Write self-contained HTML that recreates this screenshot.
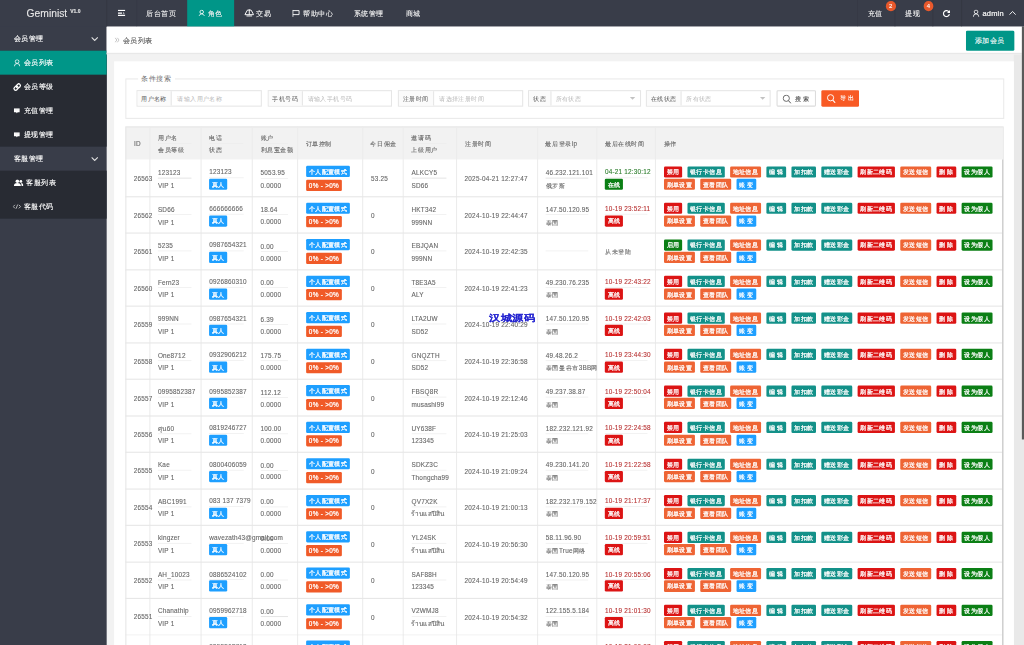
<!DOCTYPE html>
<html><head><meta charset="utf-8">
<style>
html,body{margin:0;padding:0;}
body{width:1024px;height:645px;overflow:hidden;position:relative;background:#f2f2f2;font-family:"Liberation Sans",sans-serif;color:#666;-webkit-text-stroke:0.1px;}
.abs{position:absolute;}
.header{position:absolute;left:0;top:0;width:1024px;height:26.67px;background:#393D49;}
.logo{position:absolute;left:26.6px;top:6.6px;color:#e8e8e8;font-size:10.3px;line-height:14px;white-space:nowrap;}
.logo sup{font-size:5px;position:relative;top:-1.8px;vertical-align:top;margin-left:3px;font-weight:bold;}
.nav{position:absolute;top:0;height:26.67px;line-height:26.67px;font-size:7.47px;color:#f2f2f2;white-space:nowrap;-webkit-text-stroke:0.1px;}
.hsep{position:absolute;top:0;width:1px;height:26.67px;background:#353843;}
.side{position:absolute;left:0;top:26.67px;width:106.67px;height:619px;}
.sidebg{position:absolute;left:0;top:0;width:106.67px;height:650px;background:#393D49;}
.sub{position:absolute;left:0;width:106.67px;background:#282B33;}
.sitem{position:absolute;left:0;width:106.67px;height:24px;line-height:24px;font-size:7.47px;color:#fff;white-space:nowrap;-webkit-text-stroke:0.12px;}
.crumb{position:absolute;left:106.67px;top:26.67px;width:915.3px;height:25.9px;background:#fff;border-bottom:2px solid #e8e8e8;}
.card{position:absolute;left:114.2px;top:61.2px;width:899.8px;height:600px;background:#fff;}
.fs{position:absolute;left:125.4px;top:78.2px;width:876.9px;height:38.7px;border:1.07px solid #eaeaea;}
.legend{position:absolute;left:138px;top:73px;padding:0 3.5px;background:#fff;font-size:7.47px;line-height:11px;color:#707070;-webkit-text-stroke:0;}
.ig{position:absolute;top:90.2px;height:14.1px;border:1.07px solid #e6e6e6;background:#fff;-webkit-text-stroke:0;}
.ig .lb{position:absolute;left:0;top:0;height:14.1px;line-height:16.1px;background:#fbfbfb;border-right:1.07px solid #e6e6e6;font-size:6.4px;color:#555;text-align:center;}
.ig .ph{position:absolute;top:0;height:14.1px;line-height:15.8px;font-size:6.4px;color:#b8b8b8;white-space:nowrap;}
.arrow{position:absolute;top:6px;width:0;height:0;border-left:2.7px solid transparent;border-right:2.7px solid transparent;border-top:3px solid #c2c2c2;}
.tbl-head{position:absolute;left:125.5px;top:126.4px;width:877.1px;height:33.3px;background:#f2f2f2;}
.tborder{position:absolute;left:125.5px;top:126.4px;width:876.1px;height:600px;border:1.07px solid #e6e6e6;}
.vline{position:absolute;top:126.4px;width:1px;height:520px;background:#ececec;}
.rowline{position:absolute;left:125.5px;width:877px;height:1px;background:#e6e6e6;}
.t{position:absolute;font-size:6.4px;line-height:8px;margin-top:-3.0px;color:#666;white-space:nowrap;letter-spacing:0.2px;}
.sep{position:absolute;height:0.6px;background:#e6e6e6;}
.badge{position:absolute;height:11.2px;line-height:12.2px;padding:0 2.67px;font-size:6.4px;color:#fff;-webkit-text-stroke:0.22px;overflow:hidden;border-radius:1.3px;white-space:nowrap;}
.blue{background:#1E9FFF;}
.orange{background:#EE6434;}
.badge.orange{background:#F05A28;}
.red{background:#DC1414;}
.teal{background:#139189;}
.dgreen{background:#0B7F15;}
.tgreen{color:#2B7D2B;}
.tred{color:#B83232;}
.ops{position:absolute;white-space:nowrap;font-size:0;height:11.3px;}
.btn{display:inline-block;height:11.3px;line-height:12.5px;padding:0 2.67px;font-size:6.4px;color:#fff;-webkit-text-stroke:0.22px;overflow:hidden;box-sizing:border-box;border-radius:1.3px;margin-right:5.33px;vertical-align:top;}
.wm{position:absolute;left:488.8px;top:311.25px;font-size:11.7px;line-height:14px;font-weight:bold;color:#2323d0;white-space:nowrap;letter-spacing:0px;transform:scaleY(0.8);transform-origin:50% 50%;}
.scroll{position:absolute;left:1022px;top:26.67px;width:2px;height:413px;background:#5a5a5a;}
.scrolltrack{position:absolute;left:1014px;top:52.5px;width:10px;height:600px;background:#e9e9e9;}
#root{position:absolute;left:0;top:0;width:1920px;height:1220px;transform:scale(0.5333333);transform-origin:0 0;overflow:hidden;}
#z{zoom:1.875;position:absolute;left:0;top:0;width:1024px;height:650px;overflow:hidden;}
</style></head><body><div id="root"><div id="z">
<div class="sidebg"></div>
<div class="header">
  <div class="logo">Geminist<sup>V1.0</sup></div>
  <div class="hsep" style="left:106.2px"></div>
  <div class="hsep" style="left:136.3px"></div>
  <!-- shrink icon -->
  <svg class="abs" style="left:117.8px;top:9.8px" width="7.6" height="6.6" viewBox="0 0 7.6 6.6"><path d="M0 0.8 H7.4 M0 3.6 H4.2 M0 5.8 H7.4" stroke="#fff" stroke-width="1.15"/><path d="M5.25 4.2 L6.6 4.2 L5.9 2.2 Z" fill="#fff"/></svg>
  <div class="nav" style="left:146.5px">后台首页</div>
  <div class="abs" style="left:187px;top:0;width:47px;height:26.67px;background:#009688"></div>
  <svg class="abs" style="left:198.6px;top:9.6px" width="7" height="6.6" viewBox="0 0 7 6.6"><circle cx="3.3" cy="2.4" r="1.75" fill="none" stroke="#fff" stroke-width="0.85"/><path d="M0.6 6.3 Q1.5 4.3 3.3 4.2 Q5.1 4.3 6.0 6.3" fill="none" stroke="#fff" stroke-width="0.85"/></svg>
  <div class="nav" style="left:208px">角色</div>
  <svg class="abs" style="left:244px;top:9.2px" width="10" height="7.6" viewBox="0 0 10 7.6"><path d="M3.2 1 H6.8 L9.4 5.6 H0.6 Z" fill="none" stroke="#fff" stroke-width="0.95"/><path d="M5 0.3 V5.6 M2.2 6.9 H7.8" stroke="#fff" stroke-width="0.95"/></svg>
  <div class="nav" style="left:256.4px">交易</div>
  <svg class="abs" style="left:292.5px;top:9.6px" width="7.5" height="7.5" viewBox="0 0 7.5 7.5"><path d="M0.6 0.3 L0.6 7.3 M0.6 1 L6.8 1 L6.8 5 L0.6 5" fill="none" stroke="#fff" stroke-width="0.9"/></svg>
  <div class="nav" style="left:303.2px">帮助中心</div>
  <div class="nav" style="left:354px">系统管理</div>
  <div class="nav" style="left:405.8px">商城</div>

  <div class="hsep" style="left:856.8px"></div>
  <div class="hsep" style="left:894.5px"></div>
  <div class="hsep" style="left:932.4px"></div>
  <div class="hsep" style="left:961.3px"></div>
  <div class="nav" style="left:867.8px">充值</div>
  <div class="abs" style="left:885.8px;top:1px;width:10px;height:10px;border-radius:50%;background:#E8592C;color:#fff;font-size:6px;line-height:10px;text-align:center">2</div>
  <div class="nav" style="left:905.2px">提现</div>
  <div class="abs" style="left:923.5px;top:1px;width:10px;height:10px;border-radius:50%;background:#E8592C;color:#fff;font-size:6px;line-height:10px;text-align:center">4</div>
  <svg class="abs" style="left:942.3px;top:9.8px" width="8" height="8" viewBox="0 0 8 8"><path d="M6.6 2.4 A3 3 0 1 0 7 4.6" fill="none" stroke="#fff" stroke-width="1.2"/><path d="M7.6 0.4 L7.6 3.4 L4.6 3.4 Z" fill="#fff"/></svg>
  <svg class="abs" style="left:973px;top:9.6px" width="6.5" height="7.5" viewBox="0 0 6.5 7.5"><circle cx="3.25" cy="2.3" r="1.8" fill="none" stroke="#fff" stroke-width="0.8"/><path d="M0.5 7.2 Q0.5 4.3 3.25 4.3 Q6 4.3 6 7.2" fill="none" stroke="#fff" stroke-width="0.8"/></svg>
  <div class="nav" style="left:982.5px;letter-spacing:0.2px;-webkit-text-stroke:0.25px">admin</div>
  <svg class="abs" style="left:1008.8px;top:10.5px" width="7" height="4.5" viewBox="0 0 7 4.5"><path d="M0.4 4 L3.5 0.8 L6.6 4" fill="none" stroke="#fff" stroke-width="0.9"/></svg>
</div>

<div class="side">
  <div class="sitem" style="top:0"><span style="position:absolute;left:13.75px">会员管理</span></div>
  <svg class="abs" style="left:91.2px;top:10.3px" width="7" height="4.5" viewBox="0 0 7 4.5"><path d="M0.4 0.5 L3.5 3.7 L6.6 0.5" fill="none" stroke="#e0e0e0" stroke-width="1.1"/></svg>
  <div class="sub" style="top:24px;height:96px"></div>
  <div class="sitem" style="top:24px;background:#009688"><svg class="abs" style="left:13.8px;top:8.4px" width="6.5" height="7.5" viewBox="0 0 6.5 7.5"><circle cx="3.25" cy="2.3" r="1.8" fill="none" stroke="#fff" stroke-width="0.8"/><path d="M0.5 7.2 Q0.5 4.3 3.25 4.3 Q6 4.3 6 7.2" fill="none" stroke="#fff" stroke-width="0.8"/></svg><span style="position:absolute;left:23.75px">会员列表</span></div>
  <div class="sitem" style="top:48px"><svg class="abs" style="left:12.6px;top:7.8px" width="8.8" height="8.8" viewBox="0 0 10 10"><g transform="rotate(-45 5 5)"><rect x="0.6" y="3.1" width="5.2" height="3.8" rx="1.9" fill="none" stroke="#fff" stroke-width="1.4"/><rect x="4.2" y="3.1" width="5.2" height="3.8" rx="1.9" fill="none" stroke="#fff" stroke-width="1.4"/></g></svg><span style="position:absolute;left:23.75px">会员等级</span></div>
  <div class="sitem" style="top:72px"><svg class="abs" style="left:13.9px;top:9.4px" width="6" height="5.4" viewBox="0 0 6 5.4"><path d="M0 0 H6 V4.1 H3.7 L3 5.3 L2.3 4.1 H0 Z" fill="#fff"/><path d="M0.9 1.6 H5.1" stroke="#d8d8d8" stroke-width="0.5"/></svg><span style="position:absolute;left:23.75px">充值管理</span></div>
  <div class="sitem" style="top:96px"><svg class="abs" style="left:13.9px;top:9.4px" width="6" height="5.4" viewBox="0 0 6 5.4"><path d="M0 0 H6 V4.1 H3.7 L3 5.3 L2.3 4.1 H0 Z" fill="#fff"/><path d="M0.9 1.6 H5.1" stroke="#d8d8d8" stroke-width="0.5"/></svg><span style="position:absolute;left:23.75px">提现管理</span></div>
  <div class="sitem" style="top:120px"><span style="position:absolute;left:13.75px">客服管理</span></div>
  <svg class="abs" style="left:91.2px;top:130.3px" width="7" height="4.5" viewBox="0 0 7 4.5"><path d="M0.4 0.5 L3.5 3.7 L6.6 0.5" fill="none" stroke="#e0e0e0" stroke-width="1.1"/></svg>
  <div class="sub" style="top:144px;height:48px"></div>
  <div class="sitem" style="top:144px"><svg class="abs" style="left:13.75px;top:8.5px" width="9.5" height="7" viewBox="0 0 9.5 7"><circle cx="3.5" cy="2" r="1.8" fill="#fff"/><path d="M0 6.8 Q0 3.9 3.5 3.9 Q7 3.9 7 6.8 Z" fill="#fff"/><circle cx="7" cy="2.2" r="1.4" fill="#fff"/><path d="M7.2 3.9 Q9.5 4 9.5 6.8 L7.8 6.8" fill="#fff"/></svg><span style="position:absolute;left:26.25px">客服列表</span></div>
  <div class="sitem" style="top:168px"><svg class="abs" style="left:13px;top:9.6px" width="8.2" height="4.6" viewBox="0 0 8.2 4.6"><path d="M2.2 0.5 L0.4 2.3 L2.2 4.1 M6 0.5 L7.8 2.3 L6 4.1 M4.9 0.2 L3.3 4.4" fill="none" stroke="#e6e6e6" stroke-width="0.75"/></svg><span style="position:absolute;left:23.6px">客服代码</span></div>
</div>

<div class="scrolltrack"></div>
<div class="crumb">
  <svg class="abs" style="left:8px;top:10.9px" width="5" height="5.4" viewBox="0 0 5 5.4"><path d="M0.4 0.4 L2.2 2.7 L0.4 5 M2.6 0.4 L4.4 2.7 L2.6 5" fill="none" stroke="#b5b5b5" stroke-width="0.8"/></svg>
  <span class="abs" style="left:16.6px;top:8.3px;font-size:7.47px;line-height:10px;color:#555;letter-spacing:-0.27px">会员列表</span>
</div>
<div class="abs" style="left:965.6px;top:30.3px;width:48.6px;height:20.2px;background:#009688;border-radius:1.5px;color:#fff;font-size:7.47px;line-height:20.2px;text-align:center">添加会员</div>
<div class="card"></div>
<div class="fs"></div>
<div class="legend">条件搜索</div>

<div class="ig" style="left:136.3px;width:123.6px"><div class="lb" style="width:33.4px">用户名称</div><div class="ph" style="left:40px">请输入用户名称</div></div>
<div class="ig" style="left:267.6px;width:122.4px"><div class="lb" style="width:33px">手机号码</div><div class="ph" style="left:39px">请输入手机号码</div></div>
<div class="ig" style="left:397.7px;width:123.6px"><div class="lb" style="width:34.1px">注册时间</div><div class="ph" style="left:40.5px">请选择注册时间</div></div>
<div class="ig" style="left:528.1px;width:110.7px"><div class="lb" style="width:21px">状态</div><div class="ph" style="left:26.5px">所有状态</div><div class="arrow" style="left:100.8px"></div></div>
<div class="ig" style="left:645.7px;width:122.8px"><div class="lb" style="width:33.8px">在线状态</div><div class="ph" style="left:39.5px">所有状态</div><div class="arrow" style="left:113.3px"></div></div>
<div class="abs" style="left:776.6px;top:90.2px;width:37px;height:14.4px;border:1.07px solid #dcdcdc;background:#fff;border-radius:1.3px"></div>
<svg class="abs" style="left:782.2px;top:94.6px" width="9" height="9.4" viewBox="0 0 9 9.4"><circle cx="3.9" cy="3.9" r="3.1" fill="none" stroke="#555" stroke-width="0.85"/><path d="M6.1 6.3 L8.6 9" stroke="#555" stroke-width="1"/></svg>
<div class="abs" style="left:794.8px;top:93.5px;font-size:6.4px;line-height:11px;color:#444;letter-spacing:2.2px">搜索</div>
<div class="abs" style="left:821.1px;top:90.2px;width:38.3px;height:16.4px;background:#F85A24;border-radius:1.3px"></div>
<svg class="abs" style="left:826.6px;top:93.6px" width="9" height="9.4" viewBox="0 0 9 9.4"><circle cx="3.9" cy="3.9" r="3.1" fill="none" stroke="#fff" stroke-width="0.95"/><path d="M6.1 6.3 L8.6 9" stroke="#fff" stroke-width="1.1"/></svg>
<div class="abs" style="left:840.3px;top:92.8px;font-size:6.4px;line-height:11px;color:#fff;letter-spacing:1.6px">导出</div>

<div class="tbl-head"></div>
<div class="tborder"></div>
<div class="vline" style="left:149.20px"></div><div class="vline" style="left:200.50px"></div><div class="vline" style="left:251.90px"></div><div class="vline" style="left:297.20px"></div><div class="vline" style="left:362.20px"></div><div class="vline" style="left:402.80px"></div><div class="vline" style="left:455.90px"></div><div class="vline" style="left:537.10px"></div><div class="vline" style="left:596.30px"></div><div class="vline" style="left:654.90px"></div>
<div class="t" style="left:134px;top:142.9px">ID</div>
<div class="t" style="left:158.1px;top:137.6px">用户名</div>
<div class="sep" style="left:158.1px;top:143.4px;width:33.6px;background:#eaeaea"></div>
<div class="t" style="left:158.1px;top:149.3px">会员等级</div>
<div class="t" style="left:208.9px;top:137.6px">电话</div>
<div class="sep" style="left:208.9px;top:143.4px;width:34.4px;background:#eaeaea"></div>
<div class="t" style="left:208.9px;top:149.3px">状态</div>
<div class="t" style="left:260.6px;top:137.6px">账户</div>
<div class="sep" style="left:260.6px;top:143.4px;width:27.4px;background:#eaeaea"></div>
<div class="t" style="left:260.6px;top:149.3px">利息宝金额</div>
<div class="t" style="left:305.6px;top:143px">订单控制</div>
<div class="t" style="left:370.5px;top:143px">今日佣金</div>
<div class="t" style="left:411.5px;top:137.6px">邀请码</div>
<div class="sep" style="left:411.5px;top:143.4px;width:35px;background:#eaeaea"></div>
<div class="t" style="left:411.5px;top:149.3px">上级用户</div>
<div class="t" style="left:465px;top:143px">注册时间</div>
<div class="t" style="left:545.4px;top:143px">最后登录ip</div>
<div class="t" style="left:605px;top:143px">最后在线时间</div>
<div class="t" style="left:663.6px;top:143px">操作</div>
<div class="rowline" style="top:196.22px"></div>
<div class="t c" style="left:133.70px;top:178.30px;">26563</div>
<div class="t c" style="left:157.90px;top:172.30px;">123123</div>
<div class="sep" style="left:157.90px;top:177.80px;width:33.6px"></div>
<div class="t c" style="left:157.90px;top:184.90px;">VIP 1</div>
<div class="t c nowrap" style="left:209.20px;top:171.70px;">123123</div>
<div class="sep" style="left:209.20px;top:177.50px;width:34.4px"></div>
<div class="badge blue" style="left:209.20px;top:178.80px">真人</div>
<div class="t c" style="left:260.60px;top:172.50px;">5053.95</div>
<div class="sep" style="left:260.60px;top:178.00px;width:27.4px"></div>
<div class="t c" style="left:260.60px;top:184.70px;">0.0000</div>
<div class="badge blue" style="left:306.10px;top:166.00px">个人配置模式</div>
<div class="badge orange" style="left:306.10px;top:179.70px;letter-spacing:0.3px">0% - &gt;0%</div>
<div class="t c" style="left:370.90px;top:178.40px;">53.25</div>
<div class="t c" style="left:411.50px;top:172.30px;">ALKCY5</div>
<div class="sep" style="left:411.50px;top:177.80px;width:35px"></div>
<div class="t c" style="left:411.50px;top:184.90px;">SD66</div>
<div class="t c nowrap" style="left:464.60px;top:178.40px;">2025-04-21 12:27:47</div>
<div class="t c nowrap" style="left:545.80px;top:172.30px;">46.232.121.101</div>
<div class="sep" style="left:545.80px;top:177.80px;width:42.4px"></div>
<div class="t c nowrap" style="left:545.80px;top:184.90px;">俄罗斯</div>
<div class="t c nowrap tgreen" style="left:605.00px;top:171.70px;">04-21 12:30:12</div>
<div class="sep" style="left:605.00px;top:177.50px;width:42.4px"></div>
<div class="badge dgreen" style="left:605.00px;top:178.80px">在线</div>
<div class="ops" style="left:663.90px;top:166.30px"><span class="btn red">禁用</span><span class="btn teal">银行卡信息</span><span class="btn orange">地址信息</span><span class="btn teal">编 辑</span><span class="btn teal">加扣款</span><span class="btn teal">赠送彩金</span><span class="btn red">刷新二维码</span><span class="btn orange">发送短信</span><span class="btn red">删 除</span><span class="btn dgreen">设为假人</span></div>
<div class="ops" style="left:663.90px;top:178.80px"><span class="btn orange">刷单设置</span><span class="btn orange">查看团队</span><span class="btn blue">账 变</span></div>
<div class="rowline" style="top:232.74px"></div>
<div class="t c" style="left:133.70px;top:214.82px;">26562</div>
<div class="t c" style="left:157.90px;top:208.82px;">SD66</div>
<div class="sep" style="left:157.90px;top:214.32px;width:33.6px"></div>
<div class="t c" style="left:157.90px;top:221.42px;">VIP 1</div>
<div class="t c nowrap" style="left:209.20px;top:208.22px;">666666666</div>
<div class="sep" style="left:209.20px;top:214.02px;width:34.4px"></div>
<div class="badge blue" style="left:209.20px;top:215.32px">真人</div>
<div class="t c" style="left:260.60px;top:209.02px;">18.64</div>
<div class="sep" style="left:260.60px;top:214.52px;width:27.4px"></div>
<div class="t c" style="left:260.60px;top:221.22px;">0.0000</div>
<div class="badge blue" style="left:306.10px;top:202.52px">个人配置模式</div>
<div class="badge orange" style="left:306.10px;top:216.22px;letter-spacing:0.3px">0% - &gt;0%</div>
<div class="t c" style="left:370.90px;top:214.92px;">0</div>
<div class="t c" style="left:411.50px;top:208.82px;">HKT342</div>
<div class="sep" style="left:411.50px;top:214.32px;width:35px"></div>
<div class="t c" style="left:411.50px;top:221.42px;">999NN</div>
<div class="t c nowrap" style="left:464.60px;top:214.92px;">2024-10-19 22:44:47</div>
<div class="t c nowrap" style="left:545.80px;top:208.82px;">147.50.120.95</div>
<div class="sep" style="left:545.80px;top:214.32px;width:42.4px"></div>
<div class="t c nowrap" style="left:545.80px;top:221.42px;">泰国</div>
<div class="t c nowrap tred" style="left:605.00px;top:208.22px;">10-19 23:52:11</div>
<div class="sep" style="left:605.00px;top:214.02px;width:42.4px"></div>
<div class="badge red" style="left:605.00px;top:215.32px">离线</div>
<div class="ops" style="left:663.90px;top:202.82px"><span class="btn red">禁用</span><span class="btn teal">银行卡信息</span><span class="btn orange">地址信息</span><span class="btn teal">编 辑</span><span class="btn teal">加扣款</span><span class="btn teal">赠送彩金</span><span class="btn red">刷新二维码</span><span class="btn orange">发送短信</span><span class="btn red">删 除</span><span class="btn dgreen">设为假人</span></div>
<div class="ops" style="left:663.90px;top:215.32px"><span class="btn orange">刷单设置</span><span class="btn orange">查看团队</span><span class="btn blue">账 变</span></div>
<div class="rowline" style="top:269.26px"></div>
<div class="t c" style="left:133.70px;top:251.34px;">26561</div>
<div class="t c" style="left:157.90px;top:245.34px;">5235</div>
<div class="sep" style="left:157.90px;top:250.84px;width:33.6px"></div>
<div class="t c" style="left:157.90px;top:257.94px;">VIP 1</div>
<div class="t c nowrap" style="left:209.20px;top:244.74px;">0987654321</div>
<div class="sep" style="left:209.20px;top:250.54px;width:34.4px"></div>
<div class="badge blue" style="left:209.20px;top:251.84px">真人</div>
<div class="t c" style="left:260.60px;top:245.54px;">0.00</div>
<div class="sep" style="left:260.60px;top:251.04px;width:27.4px"></div>
<div class="t c" style="left:260.60px;top:257.74px;">0.0000</div>
<div class="badge blue" style="left:306.10px;top:239.04px">个人配置模式</div>
<div class="badge orange" style="left:306.10px;top:252.74px;letter-spacing:0.3px">0% - &gt;0%</div>
<div class="t c" style="left:370.90px;top:251.44px;">0</div>
<div class="t c" style="left:411.50px;top:245.34px;">EBJQAN</div>
<div class="sep" style="left:411.50px;top:250.84px;width:35px"></div>
<div class="t c" style="left:411.50px;top:257.94px;">999NN</div>
<div class="t c nowrap" style="left:464.60px;top:251.44px;">2024-10-19 22:42:35</div>
<div class="sep" style="left:545.80px;top:250.84px;width:42.4px"></div>
<div class="t c" style="left:605.00px;top:251.44px;">从未登陆</div>
<div class="ops" style="left:663.90px;top:239.34px"><span class="btn dgreen">启用</span><span class="btn teal">银行卡信息</span><span class="btn orange">地址信息</span><span class="btn teal">编 辑</span><span class="btn teal">加扣款</span><span class="btn teal">赠送彩金</span><span class="btn red">刷新二维码</span><span class="btn orange">发送短信</span><span class="btn red">删 除</span><span class="btn dgreen">设为假人</span></div>
<div class="ops" style="left:663.90px;top:251.84px"><span class="btn orange">刷单设置</span><span class="btn orange">查看团队</span><span class="btn blue">账 变</span></div>
<div class="rowline" style="top:305.78px"></div>
<div class="t c" style="left:133.70px;top:287.86px;">26560</div>
<div class="t c" style="left:157.90px;top:281.86px;">Fern23</div>
<div class="sep" style="left:157.90px;top:287.36px;width:33.6px"></div>
<div class="t c" style="left:157.90px;top:294.46px;">VIP 1</div>
<div class="t c nowrap" style="left:209.20px;top:281.26px;">0926860310</div>
<div class="sep" style="left:209.20px;top:287.06px;width:34.4px"></div>
<div class="badge blue" style="left:209.20px;top:288.36px">真人</div>
<div class="t c" style="left:260.60px;top:282.06px;">0.00</div>
<div class="sep" style="left:260.60px;top:287.56px;width:27.4px"></div>
<div class="t c" style="left:260.60px;top:294.26px;">0.0000</div>
<div class="badge blue" style="left:306.10px;top:275.56px">个人配置模式</div>
<div class="badge orange" style="left:306.10px;top:289.26px;letter-spacing:0.3px">0% - &gt;0%</div>
<div class="t c" style="left:370.90px;top:287.96px;">0</div>
<div class="t c" style="left:411.50px;top:281.86px;">T8E3A5</div>
<div class="sep" style="left:411.50px;top:287.36px;width:35px"></div>
<div class="t c" style="left:411.50px;top:294.46px;">ALY</div>
<div class="t c nowrap" style="left:464.60px;top:287.96px;">2024-10-19 22:41:23</div>
<div class="t c nowrap" style="left:545.80px;top:281.86px;">49.230.76.235</div>
<div class="sep" style="left:545.80px;top:287.36px;width:42.4px"></div>
<div class="t c nowrap" style="left:545.80px;top:294.46px;">泰国</div>
<div class="t c nowrap tred" style="left:605.00px;top:281.26px;">10-19 22:43:22</div>
<div class="sep" style="left:605.00px;top:287.06px;width:42.4px"></div>
<div class="badge red" style="left:605.00px;top:288.36px">离线</div>
<div class="ops" style="left:663.90px;top:275.86px"><span class="btn red">禁用</span><span class="btn teal">银行卡信息</span><span class="btn orange">地址信息</span><span class="btn teal">编 辑</span><span class="btn teal">加扣款</span><span class="btn teal">赠送彩金</span><span class="btn red">刷新二维码</span><span class="btn orange">发送短信</span><span class="btn red">删 除</span><span class="btn dgreen">设为假人</span></div>
<div class="ops" style="left:663.90px;top:288.36px"><span class="btn orange">刷单设置</span><span class="btn orange">查看团队</span><span class="btn blue">账 变</span></div>
<div class="rowline" style="top:342.30px"></div>
<div class="t c" style="left:133.70px;top:324.38px;">26559</div>
<div class="t c" style="left:157.90px;top:318.38px;">999NN</div>
<div class="sep" style="left:157.90px;top:323.88px;width:33.6px"></div>
<div class="t c" style="left:157.90px;top:330.98px;">VIP 1</div>
<div class="t c nowrap" style="left:209.20px;top:317.78px;">0987654321</div>
<div class="sep" style="left:209.20px;top:323.58px;width:34.4px"></div>
<div class="badge blue" style="left:209.20px;top:324.88px">真人</div>
<div class="t c" style="left:260.60px;top:318.58px;">6.39</div>
<div class="sep" style="left:260.60px;top:324.08px;width:27.4px"></div>
<div class="t c" style="left:260.60px;top:330.78px;">0.0000</div>
<div class="badge blue" style="left:306.10px;top:312.08px">个人配置模式</div>
<div class="badge orange" style="left:306.10px;top:325.78px;letter-spacing:0.3px">0% - &gt;0%</div>
<div class="t c" style="left:370.90px;top:324.48px;">0</div>
<div class="t c" style="left:411.50px;top:318.38px;">LTA2UW</div>
<div class="sep" style="left:411.50px;top:323.88px;width:35px"></div>
<div class="t c" style="left:411.50px;top:330.98px;">SD52</div>
<div class="t c nowrap" style="left:464.60px;top:324.48px;">2024-10-19 22:40:29</div>
<div class="t c nowrap" style="left:545.80px;top:318.38px;">147.50.120.95</div>
<div class="sep" style="left:545.80px;top:323.88px;width:42.4px"></div>
<div class="t c nowrap" style="left:545.80px;top:330.98px;">泰国</div>
<div class="t c nowrap tred" style="left:605.00px;top:317.78px;">10-19 22:42:03</div>
<div class="sep" style="left:605.00px;top:323.58px;width:42.4px"></div>
<div class="badge red" style="left:605.00px;top:324.88px">离线</div>
<div class="ops" style="left:663.90px;top:312.38px"><span class="btn red">禁用</span><span class="btn teal">银行卡信息</span><span class="btn orange">地址信息</span><span class="btn teal">编 辑</span><span class="btn teal">加扣款</span><span class="btn teal">赠送彩金</span><span class="btn red">刷新二维码</span><span class="btn orange">发送短信</span><span class="btn red">删 除</span><span class="btn dgreen">设为假人</span></div>
<div class="ops" style="left:663.90px;top:324.88px"><span class="btn orange">刷单设置</span><span class="btn orange">查看团队</span><span class="btn blue">账 变</span></div>
<div class="rowline" style="top:378.82px"></div>
<div class="t c" style="left:133.70px;top:360.90px;">26558</div>
<div class="t c" style="left:157.90px;top:354.90px;">One8712</div>
<div class="sep" style="left:157.90px;top:360.40px;width:33.6px"></div>
<div class="t c" style="left:157.90px;top:367.50px;">VIP 1</div>
<div class="t c nowrap" style="left:209.20px;top:354.30px;">0932906212</div>
<div class="sep" style="left:209.20px;top:360.10px;width:34.4px"></div>
<div class="badge blue" style="left:209.20px;top:361.40px">真人</div>
<div class="t c" style="left:260.60px;top:355.10px;">175.75</div>
<div class="sep" style="left:260.60px;top:360.60px;width:27.4px"></div>
<div class="t c" style="left:260.60px;top:367.30px;">0.0000</div>
<div class="badge blue" style="left:306.10px;top:348.60px">个人配置模式</div>
<div class="badge orange" style="left:306.10px;top:362.30px;letter-spacing:0.3px">0% - &gt;0%</div>
<div class="t c" style="left:370.90px;top:361.00px;">0</div>
<div class="t c" style="left:411.50px;top:354.90px;">GNQZTH</div>
<div class="sep" style="left:411.50px;top:360.40px;width:35px"></div>
<div class="t c" style="left:411.50px;top:367.50px;">SD52</div>
<div class="t c nowrap" style="left:464.60px;top:361.00px;">2024-10-19 22:36:58</div>
<div class="t c nowrap" style="left:545.80px;top:354.90px;">49.48.26.2</div>
<div class="sep" style="left:545.80px;top:360.40px;width:42.4px"></div>
<div class="t c nowrap" style="left:545.80px;top:367.50px;">泰国曼谷市3BB网</div>
<div class="t c nowrap tred" style="left:605.00px;top:354.30px;">10-19 23:44:30</div>
<div class="sep" style="left:605.00px;top:360.10px;width:42.4px"></div>
<div class="badge red" style="left:605.00px;top:361.40px">离线</div>
<div class="ops" style="left:663.90px;top:348.90px"><span class="btn red">禁用</span><span class="btn teal">银行卡信息</span><span class="btn orange">地址信息</span><span class="btn teal">编 辑</span><span class="btn teal">加扣款</span><span class="btn teal">赠送彩金</span><span class="btn red">刷新二维码</span><span class="btn orange">发送短信</span><span class="btn red">删 除</span><span class="btn dgreen">设为假人</span></div>
<div class="ops" style="left:663.90px;top:361.40px"><span class="btn orange">刷单设置</span><span class="btn orange">查看团队</span><span class="btn blue">账 变</span></div>
<div class="rowline" style="top:415.34px"></div>
<div class="t c" style="left:133.70px;top:397.42px;">26557</div>
<div class="t c" style="left:157.90px;top:391.42px;">0995852387</div>
<div class="sep" style="left:157.90px;top:396.92px;width:33.6px"></div>
<div class="t c" style="left:157.90px;top:404.02px;">VIP 1</div>
<div class="t c nowrap" style="left:209.20px;top:390.82px;">0995852387</div>
<div class="sep" style="left:209.20px;top:396.62px;width:34.4px"></div>
<div class="badge blue" style="left:209.20px;top:397.92px">真人</div>
<div class="t c" style="left:260.60px;top:391.62px;">112.12</div>
<div class="sep" style="left:260.60px;top:397.12px;width:27.4px"></div>
<div class="t c" style="left:260.60px;top:403.82px;">0.0000</div>
<div class="badge blue" style="left:306.10px;top:385.12px">个人配置模式</div>
<div class="badge orange" style="left:306.10px;top:398.82px;letter-spacing:0.3px">0% - &gt;0%</div>
<div class="t c" style="left:370.90px;top:397.52px;">0</div>
<div class="t c" style="left:411.50px;top:391.42px;">FBSQ8R</div>
<div class="sep" style="left:411.50px;top:396.92px;width:35px"></div>
<div class="t c" style="left:411.50px;top:404.02px;">musashi99</div>
<div class="t c nowrap" style="left:464.60px;top:397.52px;">2024-10-19 22:12:46</div>
<div class="t c nowrap" style="left:545.80px;top:391.42px;">49.237.38.87</div>
<div class="sep" style="left:545.80px;top:396.92px;width:42.4px"></div>
<div class="t c nowrap" style="left:545.80px;top:404.02px;">泰国</div>
<div class="t c nowrap tred" style="left:605.00px;top:390.82px;">10-19 22:50:04</div>
<div class="sep" style="left:605.00px;top:396.62px;width:42.4px"></div>
<div class="badge red" style="left:605.00px;top:397.92px">离线</div>
<div class="ops" style="left:663.90px;top:385.42px"><span class="btn red">禁用</span><span class="btn teal">银行卡信息</span><span class="btn orange">地址信息</span><span class="btn teal">编 辑</span><span class="btn teal">加扣款</span><span class="btn teal">赠送彩金</span><span class="btn red">刷新二维码</span><span class="btn orange">发送短信</span><span class="btn red">删 除</span><span class="btn dgreen">设为假人</span></div>
<div class="ops" style="left:663.90px;top:397.92px"><span class="btn orange">刷单设置</span><span class="btn orange">查看团队</span><span class="btn blue">账 变</span></div>
<div class="rowline" style="top:451.86px"></div>
<div class="t c" style="left:133.70px;top:433.94px;">26556</div>
<div class="t c" style="left:157.90px;top:427.94px;">ศุน60</div>
<div class="sep" style="left:157.90px;top:433.44px;width:33.6px"></div>
<div class="t c" style="left:157.90px;top:440.54px;">VIP 1</div>
<div class="t c nowrap" style="left:209.20px;top:427.34px;">0819246727</div>
<div class="sep" style="left:209.20px;top:433.14px;width:34.4px"></div>
<div class="badge blue" style="left:209.20px;top:434.44px">真人</div>
<div class="t c" style="left:260.60px;top:428.14px;">100.00</div>
<div class="sep" style="left:260.60px;top:433.64px;width:27.4px"></div>
<div class="t c" style="left:260.60px;top:440.34px;">0.0000</div>
<div class="badge blue" style="left:306.10px;top:421.64px">个人配置模式</div>
<div class="badge orange" style="left:306.10px;top:435.34px;letter-spacing:0.3px">0% - &gt;0%</div>
<div class="t c" style="left:370.90px;top:434.04px;">0</div>
<div class="t c" style="left:411.50px;top:427.94px;">UY638F</div>
<div class="sep" style="left:411.50px;top:433.44px;width:35px"></div>
<div class="t c" style="left:411.50px;top:440.54px;">123345</div>
<div class="t c nowrap" style="left:464.60px;top:434.04px;">2024-10-19 21:25:03</div>
<div class="t c nowrap" style="left:545.80px;top:427.94px;">182.232.121.92</div>
<div class="sep" style="left:545.80px;top:433.44px;width:42.4px"></div>
<div class="t c nowrap" style="left:545.80px;top:440.54px;">泰国</div>
<div class="t c nowrap tred" style="left:605.00px;top:427.34px;">10-19 22:24:58</div>
<div class="sep" style="left:605.00px;top:433.14px;width:42.4px"></div>
<div class="badge red" style="left:605.00px;top:434.44px">离线</div>
<div class="ops" style="left:663.90px;top:421.94px"><span class="btn red">禁用</span><span class="btn teal">银行卡信息</span><span class="btn orange">地址信息</span><span class="btn teal">编 辑</span><span class="btn teal">加扣款</span><span class="btn teal">赠送彩金</span><span class="btn red">刷新二维码</span><span class="btn orange">发送短信</span><span class="btn red">删 除</span><span class="btn dgreen">设为假人</span></div>
<div class="ops" style="left:663.90px;top:434.44px"><span class="btn orange">刷单设置</span><span class="btn orange">查看团队</span><span class="btn blue">账 变</span></div>
<div class="rowline" style="top:488.38px"></div>
<div class="t c" style="left:133.70px;top:470.46px;">26555</div>
<div class="t c" style="left:157.90px;top:464.46px;">Kae</div>
<div class="sep" style="left:157.90px;top:469.96px;width:33.6px"></div>
<div class="t c" style="left:157.90px;top:477.06px;">VIP 1</div>
<div class="t c nowrap" style="left:209.20px;top:463.86px;">0800406059</div>
<div class="sep" style="left:209.20px;top:469.66px;width:34.4px"></div>
<div class="badge blue" style="left:209.20px;top:470.96px">真人</div>
<div class="t c" style="left:260.60px;top:464.66px;">0.00</div>
<div class="sep" style="left:260.60px;top:470.16px;width:27.4px"></div>
<div class="t c" style="left:260.60px;top:476.86px;">0.0000</div>
<div class="badge blue" style="left:306.10px;top:458.16px">个人配置模式</div>
<div class="badge orange" style="left:306.10px;top:471.86px;letter-spacing:0.3px">0% - &gt;0%</div>
<div class="t c" style="left:370.90px;top:470.56px;">0</div>
<div class="t c" style="left:411.50px;top:464.46px;">SDKZ3C</div>
<div class="sep" style="left:411.50px;top:469.96px;width:35px"></div>
<div class="t c" style="left:411.50px;top:477.06px;">Thongcha99</div>
<div class="t c nowrap" style="left:464.60px;top:470.56px;">2024-10-19 21:09:24</div>
<div class="t c nowrap" style="left:545.80px;top:464.46px;">49.230.141.20</div>
<div class="sep" style="left:545.80px;top:469.96px;width:42.4px"></div>
<div class="t c nowrap" style="left:545.80px;top:477.06px;">泰国</div>
<div class="t c nowrap tred" style="left:605.00px;top:463.86px;">10-19 21:22:58</div>
<div class="sep" style="left:605.00px;top:469.66px;width:42.4px"></div>
<div class="badge red" style="left:605.00px;top:470.96px">离线</div>
<div class="ops" style="left:663.90px;top:458.46px"><span class="btn red">禁用</span><span class="btn teal">银行卡信息</span><span class="btn orange">地址信息</span><span class="btn teal">编 辑</span><span class="btn teal">加扣款</span><span class="btn teal">赠送彩金</span><span class="btn red">刷新二维码</span><span class="btn orange">发送短信</span><span class="btn red">删 除</span><span class="btn dgreen">设为假人</span></div>
<div class="ops" style="left:663.90px;top:470.96px"><span class="btn orange">刷单设置</span><span class="btn orange">查看团队</span><span class="btn blue">账 变</span></div>
<div class="rowline" style="top:524.90px"></div>
<div class="t c" style="left:133.70px;top:506.98px;">26554</div>
<div class="t c" style="left:157.90px;top:500.98px;">ABC1991</div>
<div class="sep" style="left:157.90px;top:506.48px;width:33.6px"></div>
<div class="t c" style="left:157.90px;top:513.58px;">VIP 1</div>
<div class="t c nowrap" style="left:209.20px;top:500.38px;">083 137 7379</div>
<div class="sep" style="left:209.20px;top:506.18px;width:34.4px"></div>
<div class="badge blue" style="left:209.20px;top:507.48px">真人</div>
<div class="t c" style="left:260.60px;top:501.18px;">0.00</div>
<div class="sep" style="left:260.60px;top:506.68px;width:27.4px"></div>
<div class="t c" style="left:260.60px;top:513.38px;">0.0000</div>
<div class="badge blue" style="left:306.10px;top:494.68px">个人配置模式</div>
<div class="badge orange" style="left:306.10px;top:508.38px;letter-spacing:0.3px">0% - &gt;0%</div>
<div class="t c" style="left:370.90px;top:507.08px;">0</div>
<div class="t c" style="left:411.50px;top:500.98px;">QV7X2K</div>
<div class="sep" style="left:411.50px;top:506.48px;width:35px"></div>
<div class="t c" style="left:411.50px;top:513.58px;">ร้านแสปีสิน</div>
<div class="t c nowrap" style="left:464.60px;top:507.08px;">2024-10-19 21:00:13</div>
<div class="t c nowrap" style="left:545.80px;top:500.98px;">182.232.179.152</div>
<div class="sep" style="left:545.80px;top:506.48px;width:42.4px"></div>
<div class="t c nowrap" style="left:545.80px;top:513.58px;">泰国</div>
<div class="t c nowrap tred" style="left:605.00px;top:500.38px;">10-19 21:17:37</div>
<div class="sep" style="left:605.00px;top:506.18px;width:42.4px"></div>
<div class="badge red" style="left:605.00px;top:507.48px">离线</div>
<div class="ops" style="left:663.90px;top:494.98px"><span class="btn red">禁用</span><span class="btn teal">银行卡信息</span><span class="btn orange">地址信息</span><span class="btn teal">编 辑</span><span class="btn teal">加扣款</span><span class="btn teal">赠送彩金</span><span class="btn red">刷新二维码</span><span class="btn orange">发送短信</span><span class="btn red">删 除</span><span class="btn dgreen">设为假人</span></div>
<div class="ops" style="left:663.90px;top:507.48px"><span class="btn orange">刷单设置</span><span class="btn orange">查看团队</span><span class="btn blue">账 变</span></div>
<div class="rowline" style="top:561.42px"></div>
<div class="t c" style="left:133.70px;top:543.50px;">26553</div>
<div class="t c" style="left:157.90px;top:537.50px;">kingzer</div>
<div class="sep" style="left:157.90px;top:543.00px;width:33.6px"></div>
<div class="t c" style="left:157.90px;top:550.10px;">VIP 1</div>
<div class="t c nowrap" style="left:209.20px;top:536.90px;">wavezath43@gmail.com</div>
<div class="sep" style="left:209.20px;top:542.70px;width:34.4px"></div>
<div class="badge blue" style="left:209.20px;top:544.00px">真人</div>
<div class="t c" style="left:260.60px;top:537.70px;">0.00</div>
<div class="sep" style="left:260.60px;top:543.20px;width:27.4px"></div>
<div class="t c" style="left:260.60px;top:549.90px;">0.0000</div>
<div class="badge blue" style="left:306.10px;top:531.20px">个人配置模式</div>
<div class="badge orange" style="left:306.10px;top:544.90px;letter-spacing:0.3px">0% - &gt;0%</div>
<div class="t c" style="left:370.90px;top:543.60px;">0</div>
<div class="t c" style="left:411.50px;top:537.50px;">YL24SK</div>
<div class="sep" style="left:411.50px;top:543.00px;width:35px"></div>
<div class="t c" style="left:411.50px;top:550.10px;">ร้านแสปีสิน</div>
<div class="t c nowrap" style="left:464.60px;top:543.60px;">2024-10-19 20:56:30</div>
<div class="t c nowrap" style="left:545.80px;top:537.50px;">58.11.96.90</div>
<div class="sep" style="left:545.80px;top:543.00px;width:42.4px"></div>
<div class="t c nowrap" style="left:545.80px;top:550.10px;">泰国True网络</div>
<div class="t c nowrap tred" style="left:605.00px;top:536.90px;">10-19 20:59:51</div>
<div class="sep" style="left:605.00px;top:542.70px;width:42.4px"></div>
<div class="badge red" style="left:605.00px;top:544.00px">离线</div>
<div class="ops" style="left:663.90px;top:531.50px"><span class="btn red">禁用</span><span class="btn teal">银行卡信息</span><span class="btn orange">地址信息</span><span class="btn teal">编 辑</span><span class="btn teal">加扣款</span><span class="btn teal">赠送彩金</span><span class="btn red">刷新二维码</span><span class="btn orange">发送短信</span><span class="btn red">删 除</span><span class="btn dgreen">设为假人</span></div>
<div class="ops" style="left:663.90px;top:544.00px"><span class="btn orange">刷单设置</span><span class="btn orange">查看团队</span><span class="btn blue">账 变</span></div>
<div class="rowline" style="top:597.94px"></div>
<div class="t c" style="left:133.70px;top:580.02px;">26552</div>
<div class="t c" style="left:157.90px;top:574.02px;">AH_10023</div>
<div class="sep" style="left:157.90px;top:579.52px;width:33.6px"></div>
<div class="t c" style="left:157.90px;top:586.62px;">VIP 1</div>
<div class="t c nowrap" style="left:209.20px;top:573.42px;">0886524102</div>
<div class="sep" style="left:209.20px;top:579.22px;width:34.4px"></div>
<div class="badge blue" style="left:209.20px;top:580.52px">真人</div>
<div class="t c" style="left:260.60px;top:574.22px;">0.00</div>
<div class="sep" style="left:260.60px;top:579.72px;width:27.4px"></div>
<div class="t c" style="left:260.60px;top:586.42px;">0.0000</div>
<div class="badge blue" style="left:306.10px;top:567.72px">个人配置模式</div>
<div class="badge orange" style="left:306.10px;top:581.42px;letter-spacing:0.3px">0% - &gt;0%</div>
<div class="t c" style="left:370.90px;top:580.12px;">0</div>
<div class="t c" style="left:411.50px;top:574.02px;">SAF88H</div>
<div class="sep" style="left:411.50px;top:579.52px;width:35px"></div>
<div class="t c" style="left:411.50px;top:586.62px;">123345</div>
<div class="t c nowrap" style="left:464.60px;top:580.12px;">2024-10-19 20:54:49</div>
<div class="t c nowrap" style="left:545.80px;top:574.02px;">147.50.120.95</div>
<div class="sep" style="left:545.80px;top:579.52px;width:42.4px"></div>
<div class="t c nowrap" style="left:545.80px;top:586.62px;">泰国</div>
<div class="t c nowrap tred" style="left:605.00px;top:573.42px;">10-19 20:55:06</div>
<div class="sep" style="left:605.00px;top:579.22px;width:42.4px"></div>
<div class="badge red" style="left:605.00px;top:580.52px">离线</div>
<div class="ops" style="left:663.90px;top:568.02px"><span class="btn red">禁用</span><span class="btn teal">银行卡信息</span><span class="btn orange">地址信息</span><span class="btn teal">编 辑</span><span class="btn teal">加扣款</span><span class="btn teal">赠送彩金</span><span class="btn red">刷新二维码</span><span class="btn orange">发送短信</span><span class="btn red">删 除</span><span class="btn dgreen">设为假人</span></div>
<div class="ops" style="left:663.90px;top:580.52px"><span class="btn orange">刷单设置</span><span class="btn orange">查看团队</span><span class="btn blue">账 变</span></div>
<div class="rowline" style="top:634.46px"></div>
<div class="t c" style="left:133.70px;top:616.54px;">26551</div>
<div class="t c" style="left:157.90px;top:610.54px;">Chanathip</div>
<div class="sep" style="left:157.90px;top:616.04px;width:33.6px"></div>
<div class="t c" style="left:157.90px;top:623.14px;">VIP 1</div>
<div class="t c nowrap" style="left:209.20px;top:609.94px;">0959962718</div>
<div class="sep" style="left:209.20px;top:615.74px;width:34.4px"></div>
<div class="badge blue" style="left:209.20px;top:617.04px">真人</div>
<div class="t c" style="left:260.60px;top:610.74px;">0.00</div>
<div class="sep" style="left:260.60px;top:616.24px;width:27.4px"></div>
<div class="t c" style="left:260.60px;top:622.94px;">0.0000</div>
<div class="badge blue" style="left:306.10px;top:604.24px">个人配置模式</div>
<div class="badge orange" style="left:306.10px;top:617.94px;letter-spacing:0.3px">0% - &gt;0%</div>
<div class="t c" style="left:370.90px;top:616.64px;">0</div>
<div class="t c" style="left:411.50px;top:610.54px;">V2WMJ8</div>
<div class="sep" style="left:411.50px;top:616.04px;width:35px"></div>
<div class="t c" style="left:411.50px;top:623.14px;">ร้านแสปีสิน</div>
<div class="t c nowrap" style="left:464.60px;top:616.64px;">2024-10-19 20:54:32</div>
<div class="t c nowrap" style="left:545.80px;top:610.54px;">122.155.5.184</div>
<div class="sep" style="left:545.80px;top:616.04px;width:42.4px"></div>
<div class="t c nowrap" style="left:545.80px;top:623.14px;">泰国</div>
<div class="t c nowrap tred" style="left:605.00px;top:609.94px;">10-19 21:01:30</div>
<div class="sep" style="left:605.00px;top:615.74px;width:42.4px"></div>
<div class="badge red" style="left:605.00px;top:617.04px">离线</div>
<div class="ops" style="left:663.90px;top:604.54px"><span class="btn red">禁用</span><span class="btn teal">银行卡信息</span><span class="btn orange">地址信息</span><span class="btn teal">编 辑</span><span class="btn teal">加扣款</span><span class="btn teal">赠送彩金</span><span class="btn red">刷新二维码</span><span class="btn orange">发送短信</span><span class="btn red">删 除</span><span class="btn dgreen">设为假人</span></div>
<div class="ops" style="left:663.90px;top:617.04px"><span class="btn orange">刷单设置</span><span class="btn orange">查看团队</span><span class="btn blue">账 变</span></div>
<div class="rowline" style="top:670.98px"></div>
<div class="t c" style="left:133.70px;top:653.06px;">26550</div>
<div class="t c" style="left:157.90px;top:647.06px;">0959962718</div>
<div class="sep" style="left:157.90px;top:652.56px;width:33.6px"></div>
<div class="t c" style="left:157.90px;top:659.66px;">VIP 1</div>
<div class="t c nowrap" style="left:209.20px;top:646.46px;">0959962718</div>
<div class="sep" style="left:209.20px;top:652.26px;width:34.4px"></div>
<div class="badge blue" style="left:209.20px;top:653.56px">真人</div>
<div class="t c" style="left:260.60px;top:647.26px;">0.00</div>
<div class="sep" style="left:260.60px;top:652.76px;width:27.4px"></div>
<div class="t c" style="left:260.60px;top:659.46px;">0.0000</div>
<div class="badge blue" style="left:306.10px;top:640.76px">个人配置模式</div>
<div class="badge orange" style="left:306.10px;top:654.46px;letter-spacing:0.3px">0% - &gt;0%</div>
<div class="t c" style="left:370.90px;top:653.16px;">0</div>
<div class="t c" style="left:411.50px;top:647.06px;">V2WMJ8</div>
<div class="sep" style="left:411.50px;top:652.56px;width:35px"></div>
<div class="t c" style="left:411.50px;top:659.66px;">123345</div>
<div class="t c nowrap" style="left:464.60px;top:653.16px;">2024-10-19 20:50:11</div>
<div class="t c nowrap" style="left:545.80px;top:647.06px;">122.155.5.184</div>
<div class="sep" style="left:545.80px;top:652.56px;width:42.4px"></div>
<div class="t c nowrap" style="left:545.80px;top:659.66px;">泰国</div>
<div class="t c nowrap tred" style="left:605.00px;top:646.46px;">10-19 21:00:07</div>
<div class="sep" style="left:605.00px;top:652.26px;width:42.4px"></div>
<div class="badge red" style="left:605.00px;top:653.56px">离线</div>
<div class="ops" style="left:663.90px;top:641.06px"><span class="btn red">禁用</span><span class="btn teal">银行卡信息</span><span class="btn orange">地址信息</span><span class="btn teal">编 辑</span><span class="btn teal">加扣款</span><span class="btn teal">赠送彩金</span><span class="btn red">刷新二维码</span><span class="btn orange">发送短信</span><span class="btn red">删 除</span><span class="btn dgreen">设为假人</span></div>
<div class="ops" style="left:663.90px;top:653.56px"><span class="btn orange">刷单设置</span><span class="btn orange">查看团队</span><span class="btn blue">账 变</span></div>
<div class="abs" style="left:1002.1px;top:159.7px;width:1.1px;height:490px;background:#cbcbcb"></div>
<div class="wm">汉城源码</div>
<div class="scroll"></div>
</div></div></body></html>
